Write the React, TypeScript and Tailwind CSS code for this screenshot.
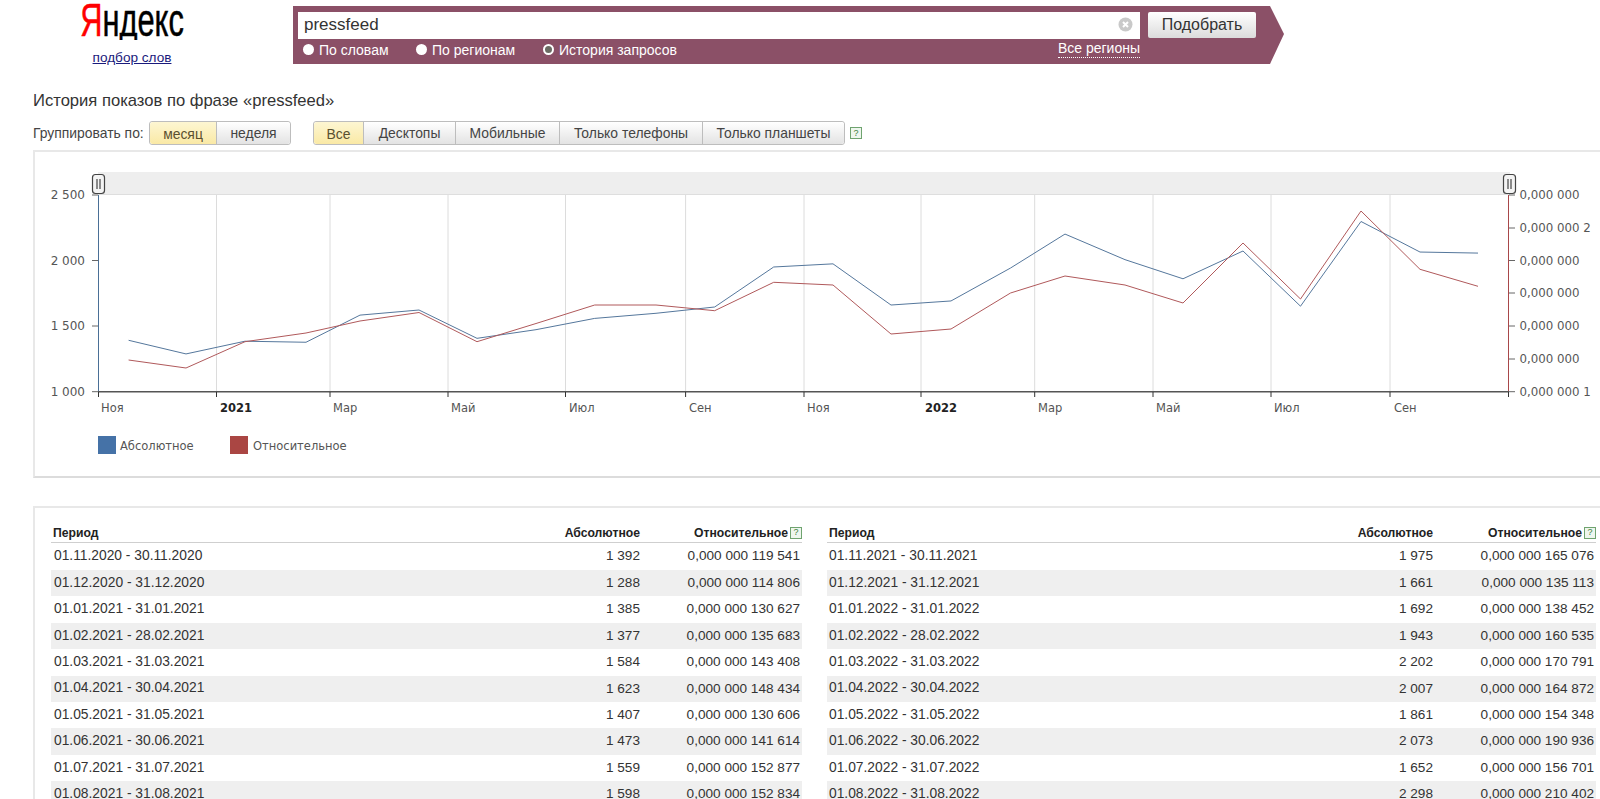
import React from "react";

const left: [string, string, string][] = [
  ["01.11.2020 - 30.11.2020", "1 392", "0,000 000 119 541"],
  ["01.12.2020 - 31.12.2020", "1 288", "0,000 000 114 806"],
  ["01.01.2021 - 31.01.2021", "1 385", "0,000 000 130 627"],
  ["01.02.2021 - 28.02.2021", "1 377", "0,000 000 135 683"],
  ["01.03.2021 - 31.03.2021", "1 584", "0,000 000 143 408"],
  ["01.04.2021 - 30.04.2021", "1 623", "0,000 000 148 434"],
  ["01.05.2021 - 31.05.2021", "1 407", "0,000 000 130 606"],
  ["01.06.2021 - 30.06.2021", "1 473", "0,000 000 141 614"],
  ["01.07.2021 - 31.07.2021", "1 559", "0,000 000 152 877"],
  ["01.08.2021 - 31.08.2021", "1 598", "0,000 000 152 834"],
];
const right: [string, string, string][] = [
  ["01.11.2021 - 30.11.2021", "1 975", "0,000 000 165 076"],
  ["01.12.2021 - 31.12.2021", "1 661", "0,000 000 135 113"],
  ["01.01.2022 - 31.01.2022", "1 692", "0,000 000 138 452"],
  ["01.02.2022 - 28.02.2022", "1 943", "0,000 000 160 535"],
  ["01.03.2022 - 31.03.2022", "2 202", "0,000 000 170 791"],
  ["01.04.2022 - 30.04.2022", "2 007", "0,000 000 164 872"],
  ["01.05.2022 - 31.05.2022", "1 861", "0,000 000 154 348"],
  ["01.06.2022 - 30.06.2022", "2 073", "0,000 000 190 936"],
  ["01.07.2022 - 31.07.2022", "1 652", "0,000 000 156 701"],
  ["01.08.2022 - 31.08.2022", "2 298", "0,000 000 210 402"],
];

const xs = [128.6, 186, 245, 306, 360, 419, 477, 536, 594.7, 656, 714.7, 773.7, 833, 891, 951, 1010.5, 1065, 1125, 1183, 1243, 1300.5, 1361, 1420, 1478];
const blueV = [1392, 1288, 1385, 1377, 1584, 1623, 1407, 1473, 1559, 1598, 1646, 1951, 1975, 1661, 1692, 1943, 2202, 2007, 1861, 2073, 1652, 2298, 2065, 2057];
const blueY = blueV.map((v) => 391.7 - ((v - 1000) / 1500) * 196.7);
const redY = [360, 368, 341.7, 333, 321, 312.5, 341.7, 323.5, 305, 305, 310.7, 282.3, 285, 334, 329, 293, 276, 285, 303, 243, 299, 211, 269.3, 286.3];
const pts = (ys: number[]) => xs.map((x, i) => `${x},${ys[i]}`).join(" ");

const grid = [216.5, 330, 448, 565.5, 685.6, 804, 921, 1034.7, 1153, 1271, 1390];
const months: [string, number, boolean][] = [
  ["Ноя", 101, false], ["2021", 220, true], ["Мар", 333, false], ["Май", 451, false], ["Июл", 569, false], ["Сен", 689, false],
  ["Ноя", 807, false], ["2022", 925, true], ["Мар", 1038, false], ["Май", 1156, false], ["Июл", 1274, false], ["Сен", 1394, false],
];
const leftAxis: [string, number][] = [["2 500", 195], ["2 000", 260.5], ["1 500", 326], ["1 000", 391.7]];
const rightAxis: [string, number][] = [
  ["0,000 000", 195], ["0,000 000 2", 228], ["0,000 000", 260.5], ["0,000 000", 293], ["0,000 000", 326], ["0,000 000", 359], ["0,000 000 1", 391.7],
];

function Help() {
  return (
    <span className="inline-flex h-[12px] w-[12px] items-center justify-center border border-[#6fa36f] bg-[#eef6ee] text-[9px] font-normal leading-none text-[#3d7f3d]">?</span>
  );
}

function Radio({ label, on }: { label: string; on?: boolean }) {
  return (
    <span className="flex items-center gap-[5px] text-[14px] leading-none text-white">
      <span className={on ? "h-[11px] w-[11px] rounded-full border-[2px] border-white bg-[#6b6b63]" : "h-[11px] w-[11px] rounded-full bg-white"} />
      {label}
    </span>
  );
}

function Seg({ label, w, active, first, last }: { label: string; w: string; active?: boolean; first?: boolean; last?: boolean }) {
  return (
    <span
      className={[
        "flex h-full items-center justify-center border-r border-[#bdbdbd] text-[13.9px]",
        w,
        active ? "bg-gradient-to-b from-[#fdf6d2] to-[#fae9a5] pt-[3px] text-[#5a5030]" : "bg-gradient-to-b from-[#ffffff] to-[#e3e3e3] text-[#444]",
        first ? "rounded-l-[3px]" : "",
        last ? "rounded-r-[3px] border-r-0" : "",
      ].join(" ")}
    >
      {label}
    </span>
  );
}

function DataTable({ rows, w, absW, relW, pad }: { rows: [string, string, string][]; w: string; absW: string; relW: string; pad: string }) {
  return (
    <table className={`${w} shrink-0 table-fixed border-collapse`}>
      <thead>
        <tr className="h-[22px] border-b border-[#cfcfcf] text-[12.2px] leading-[14px] text-[#222]">
          <th className="pb-[2px] pl-[2px] text-left align-bottom font-bold">Период</th>
          <th className={`${absW} pb-[2px] text-right align-bottom font-bold`}>Абсолютное</th>
          <th className={`${relW} pb-[2px] text-right align-bottom font-bold`}>
            <span className="inline-flex items-center gap-[2px]">
              Относительное <Help />
            </span>
          </th>
        </tr>
      </thead>
      <tbody>
        {rows.map((r, i) => (
          <tr key={r[0]} className={[i === 0 ? "h-[28px]" : "h-[26.4px]", i % 2 ? "bg-[#efefef]" : "bg-white"].join(" ")}>
            <td className={`${pad} text-[13.8px] text-[#333]`}>{r[0]}</td>
            <td className="text-right text-[13.6px] text-[#333]">{r[1]}</td>
            <td className="pr-[2px] text-right text-[13.6px] text-[#333]">{r[2]}</td>
          </tr>
        ))}
      </tbody>
    </table>
  );
}

export default function App() {
  return (
    <div className="h-[799px] w-[1600px] overflow-hidden bg-white font-['Liberation_Sans',Arial,sans-serif]">
      {/* header */}
      <header className="flex h-[64px] items-start">
        <div className="flex w-[264px] shrink-0 flex-col items-center">
          <div className="h-[40px] w-full overflow-hidden text-center">
            <div className="-mt-[3px] origin-center scale-x-[0.67] whitespace-nowrap text-[46px] leading-[46px] text-black [-webkit-text-stroke:0.5px]">
              <span className="text-[#f00]">Я</span>ндекс
            </div>
          </div>
          <a className="mt-[10px] text-[13.6px] leading-[16px] text-[#1a1a7c] underline">подбор слов</a>
        </div>
        <div className="mt-[6px] ml-[29px] flex h-[58px] w-[991px] flex-col bg-[#8b5067] pl-[5px] [clip-path:polygon(0_0,977px_0,991px_28px,977px_58px,0_58px)]">
          <div className="mt-[6px] flex h-[27px] items-start">
            <div className="flex h-[27px] w-[842px] items-center justify-between bg-white pb-[2px] pl-[6px] pr-[7px] text-[17px] text-[#333]">
              pressfeed
              <svg width="15" height="15" viewBox="0 0 15 15">
                <circle cx="7.5" cy="7.5" r="7" fill="#c9c9c9" />
                <path d="M5 5l5 5M10 5l-5 5" stroke="#fff" strokeWidth="2" />
              </svg>
            </div>
            <div className="ml-[8px] flex h-[26px] w-[108px] items-center justify-center rounded-[2px] bg-gradient-to-b from-[#ffffff] to-[#dcdcdc] text-[16px] text-[#333]">
              Подобрать
            </div>
          </div>
          <div className="flex h-[21px] items-center">
            <div className="flex w-[842px] items-center justify-between pl-[5px]">
              <div className="flex items-center">
                <span className="w-[113px]"><Radio label="По словам" /></span>
                <span className="w-[127px]"><Radio label="По регионам" /></span>
                <Radio label="История запросов" on />
              </div>
              <span className="border-b border-dotted border-white pb-[2px] text-[14px] leading-none text-white">Все регионы</span>
            </div>
          </div>
        </div>
      </header>

      {/* title */}
      <h1 className="mt-[28px] ml-[33px] h-[18px] text-[16.6px] font-normal leading-[18px] text-[#333]">История показов по фразе «pressfeed»</h1>

      {/* toolbar */}
      <div className="mt-[11px] ml-[33px] flex h-[24px] items-center">
        <span className="w-[116px] text-[13.9px] text-[#444]">Группировать по:</span>
        <div className="flex h-[24px] rounded-[3px] border border-[#bdbdbd]">
          <Seg label="месяц" w="w-[67px]" active first />
          <Seg label="неделя" w="w-[73px]" last />
        </div>
        <div className="ml-[22px] flex h-[24px] rounded-[3px] border border-[#bdbdbd]">
          <Seg label="Все" w="w-[50px]" active first />
          <Seg label="Десктопы" w="w-[92px]" />
          <Seg label="Мобильные" w="w-[104px]" />
          <Seg label="Только телефоны" w="w-[143px]" />
          <Seg label="Только планшеты" w="w-[141px]" last />
        </div>
        <span className="ml-[5px] flex"><Help /></span>
      </div>

      {/* chart */}
      <section className="mt-[5px] ml-[33px] h-[328px] w-[1600px] border-2 border-[#e8e8e8] border-b-[#dcdcdc] bg-white">
        <svg width="1565" height="324" viewBox="35 152 1565 324" className="block">
          <rect x="98" y="172" width="1412" height="22" fill="#eeeeee" />
          <line x1="98" y1="194.5" x2="1510" y2="194.5" stroke="#dedede" />
          {grid.map((x) => (
            <line key={x} x1={x} y1="195" x2={x} y2="391" stroke="#dcdcdc" />
          ))}
          <line x1="98.5" y1="195" x2="98.5" y2="392" stroke="#4a6f96" />
          <line x1="1508.5" y1="195" x2="1508.5" y2="392" stroke="#a8484a" />
          <line x1="98" y1="391.8" x2="1509" y2="391.8" stroke="#555555" strokeWidth="1.5" />
          {[98.5, ...grid, 1508.5].map((x) => (
            <line key={x} x1={x} y1="392" x2={x} y2="397" stroke="#333333" />
          ))}
          {leftAxis.map(([t, y]) => (
            <g key={t}>
              <line x1="92" y1={y} x2="98" y2={y} stroke="#666666" />
              <text x="85" y={y + 4} textAnchor="end" fontFamily="DejaVu Sans" fontSize="12" fill="#555555">{t}</text>
            </g>
          ))}
          {rightAxis.map(([t, y], i) => (
            <g key={i}>
              <line x1="1509" y1={y} x2="1515" y2={y} stroke="#666666" />
              <text x="1519.5" y={y + 4} fontFamily="DejaVu Sans" fontSize="11.8" fill="#555555">{t}</text>
            </g>
          ))}
          {months.map(([t, x, b]) => (
            <text key={x} x={x} y="412" fontFamily="DejaVu Sans" fontSize="11.5" fontWeight={b ? 700 : 400} fill={b ? "#222222" : "#555555"}>{t}</text>
          ))}
          <polyline points={pts(blueY)} fill="none" stroke="#55779c" strokeWidth="1" />
          <polyline points={pts(redY)} fill="none" stroke="#b0595b" strokeWidth="1" />
          {[92, 1503].map((x) => (
            <g key={x}>
              <rect x={x + 0.5} y="174.5" width="12" height="19" rx="3" fill="#f4f4f4" stroke="#444444" strokeWidth="1.2" />
              <path d={`M${x + 5} 179v10M${x + 8} 179v10`} stroke="#444444" strokeWidth="1.2" />
            </g>
          ))}
          <rect x="98" y="436" width="18" height="18" fill="#4572a7" />
          <text x="120" y="450" fontFamily="DejaVu Sans" fontSize="11.5" fill="#555555">Абсолютное</text>
          <rect x="230" y="436" width="18" height="18" fill="#aa4643" />
          <text x="253" y="450" fontFamily="DejaVu Sans" fontSize="11.5" fill="#555555">Относительное</text>
        </svg>
      </section>

      {/* tables */}
      <section className="mt-[28px] ml-[33px] flex h-[400px] w-[1600px] items-start gap-[25px] border-2 border-[#e8e8e8] bg-white pt-[12px] pl-[16px]">
        <DataTable rows={left} w="w-[751px]" absW="w-[120px]" relW="w-[162px]" pad="pl-[3px]" />
        <DataTable rows={right} w="w-[769px]" absW="w-[120px]" relW="w-[163px]" pad="pl-[2px]" />
      </section>
    </div>
  );
}
